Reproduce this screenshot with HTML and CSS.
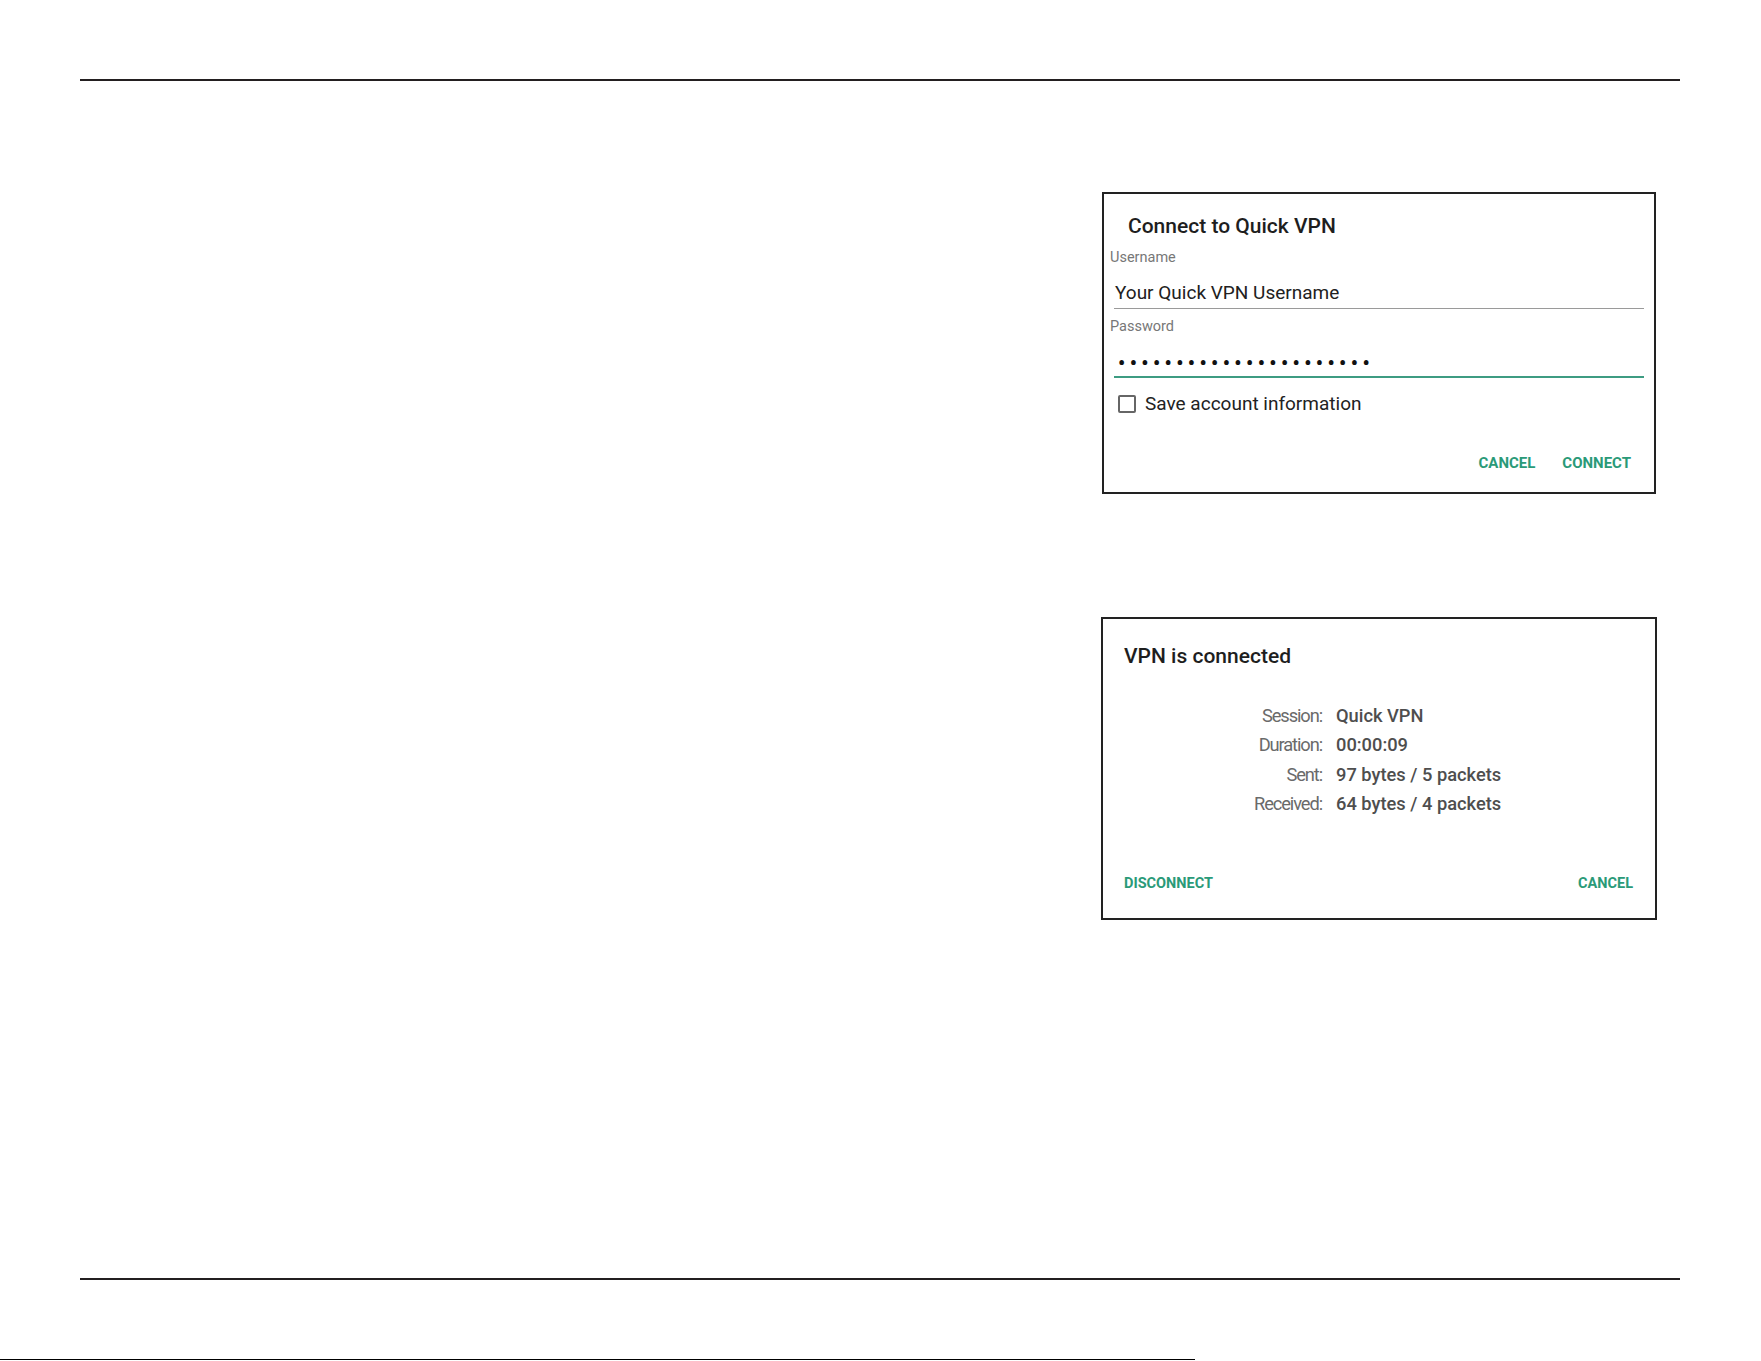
FILE: index.html
```html
<!DOCTYPE html>
<html lang="en">
<head>
<meta charset="utf-8">
<title>Quick VPN</title>
<link rel="stylesheet" href="styles.css">
</head>
<body>
<div class="page">
  <div class="rule rule-top"></div>
  <main class="content">
    <div class="dialogs">
      <section class="dialog login">
        <h2 class="login-title">Connect to Quick VPN</h2>
        <div class="field-label">Username</div>
        <div class="field">Your Quick VPN Username</div>
        <div class="field-label label-pass">Password</div>
        <div class="field field-active"><span class="dots">••••••••••••••••••••••</span></div>
        <label class="check-row"><span class="checkbox"></span><span>Save account information</span></label>
        <div class="actions actions-end">
          <span class="btn">CANCEL</span>
          <span class="btn">CONNECT</span>
        </div>
      </section>
      <section class="dialog status">
        <h2 class="status-title">VPN is connected</h2>
        <dl class="stats">
          <dt>Session:</dt><dd>Quick VPN</dd>
          <dt>Duration:</dt><dd>00:00:09</dd>
          <dt>Sent:</dt><dd>97 bytes / 5 packets</dd>
          <dt>Received:</dt><dd>64 bytes / 4 packets</dd>
        </dl>
        <div class="actions actions-split">
          <span class="btn btn-sm">DISCONNECT</span>
          <span class="btn btn-sm">CANCEL</span>
        </div>
      </section>
    </div>
  </main>
  <div class="rule rule-bottom"></div>
</div>
<div class="edge"></div>
</body>
</html>
```
FILE: styles.css
```css
* { box-sizing: border-box; }
html, body { margin: 0; padding: 0; background: #fff; }
body { font-family: Roboto, "Liberation Sans", Arial, sans-serif; color: #212121; width: 1761px; height: 1361px; overflow: hidden; }

.page { padding: 0 81px 0 80px; }
.rule { height: 2px; background: #231f20; }
.rule-top { margin-top: 79px; }

.content {
  height: 1197px;
  display: flex;
  justify-content: flex-end;
  padding: 111px 23px 0 0;
}
.dialogs { width: 556px; display: flex; flex-direction: column; }

.dialog { border: 2px solid #222; background: #fff; display: flex; flex-direction: column; flex-shrink: 0; }
.login { margin: 0 1px; height: 302px; }
.status { margin-top: 123px; height: 303px; }

/* login dialog */
.login-title {
  margin: 20px 0 0 24px;
  font-size: 21px; line-height: 24px; font-weight: 500; color: #1e1e1e;
}
.field-label {
  margin: 12px 0 0 6px;
  font-size: 14.5px; line-height: 16px; color: #777;
}
.label-pass { margin-top: 10px; }
.field {
  margin: 15px 10px 0 10px;
  padding: 0 0 3px 1px;
  font-size: 19px; line-height: 24px; color: #212121;
  border-bottom: 1px solid #9a9a9a;
}
.field-active {
  margin-top: 16px; padding-bottom: 0;
  border-bottom: 2px solid #3d9c82;
}
.dots { font-size: 20px; letter-spacing: 4.45px; padding-left: 3px; color: #111; font-weight: 700; }
.check-row {
  margin: 14px 0 0 14px;
  display: flex; align-items: center; gap: 9px;
  font-size: 19px; line-height: 24px; color: #222;
}
.checkbox { width: 18px; height: 18px; border: 2px solid #666; border-radius: 2px; }

.actions { display: flex; }
.actions-end { margin-top: 37px; padding-right: 23px; justify-content: flex-end; gap: 27px; }
.btn { font-size: 15px; line-height: 20px; font-weight: 700; color: #2a9a78; }

/* status dialog */
.status-title {
  margin: 24px 0 0 21px;
  font-size: 21px; line-height: 26px; font-weight: 500; color: #1e1e1e;
}
.stats {
  margin: 32px 0 0 0;
  display: grid; grid-template-columns: 219px auto; column-gap: 14px;
  font-size: 18.3px; line-height: 29.3px;
}
.stats dt { text-align: right; color: #6a6a6a; letter-spacing: -1.1px; }
.stats dd { margin: 0; font-weight: 500; color: #4e4e4e; }
.actions-split { margin-top: 56px; padding: 0 22px 0 21px; justify-content: space-between; }
.btn-sm { font-size: 14.5px; }

.edge { margin-top: 79px; width: 1195px; height: 1px; background: #000; }
```
